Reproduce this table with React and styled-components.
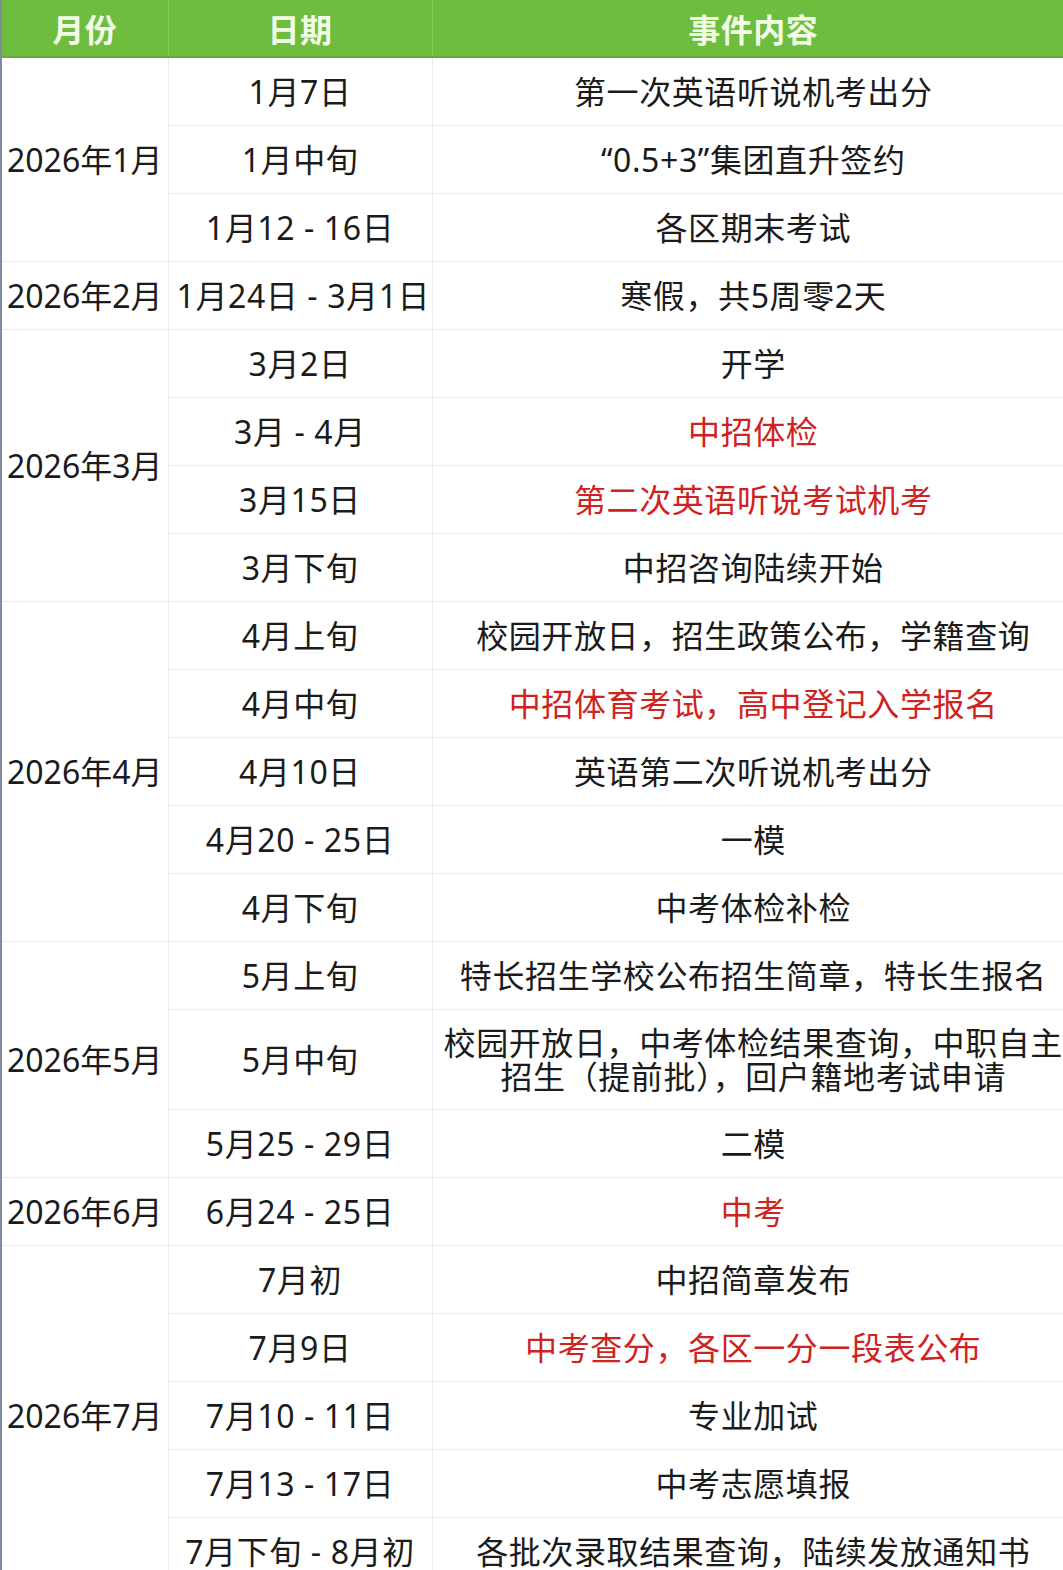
import React from "react";
import styled, { createGlobalStyle } from "styled-components";

const GlobalStyle = createGlobalStyle`
  html, body {
    margin: 0;
    padding: 0;
    background: #ffffff;
    overflow: hidden;
  }
`;

const Frame = styled.div`
  width: 1074px;
  border-left: 2px solid #7f8c9e;
  background: #ffffff;
  font-family: "Noto Sans", "Noto Sans CJK SC", sans-serif;
`;

const Table = styled.table`
  width: 1072px;
  border-collapse: collapse;
  table-layout: fixed;
`;

const HeadCell = styled.th`
  height: 56px;
  padding: 0;
  background: #6fbd3f;
  border-bottom: 2px solid #63ad36;
  border-right: 1px solid #86cc5c;
  color: #f1fbe6;
  font-size: 32px;
  font-weight: 700;
  text-align: center;
  letter-spacing: 0.5px;

  &:last-child {
    border-right: none;
  }
`;

const Cell = styled.td`
  height: ${(props) => (props.$tall ? "99px" : "67px")};
  padding: 0 8px;
  border: 1px solid #ebebeb;
  color: ${(props) => (props.$red ? "#cf2321" : "#1b1b1b")};
  font-size: 32px;
  line-height: 34px;
  letter-spacing: 0.6px;
  text-align: center;
  vertical-align: middle;
  white-space: ${(props) => (props.$wrap ? "normal" : "nowrap")};
`;

const MonthCell = styled(Cell)`
  padding: 0;
  letter-spacing: 0;
  border-left: none;
`;

const EventCell = styled(Cell)`
  border-right: none;
`;

const schedule = [
  {
    month: "2026年1月",
    rows: [
      ["1月7日", "第一次英语听说机考出分"],
      ["1月中旬", "“0.5+3”集团直升签约"],
      ["1月12 - 16日", "各区期末考试"],
    ],
  },
  {
    month: "2026年2月",
    rows: [["1月24日 - 3月1日", "寒假，共5周零2天"]],
  },
  {
    month: "2026年3月",
    rows: [
      ["3月2日", "开学"],
      ["3月 - 4月", "中招体检", true],
      ["3月15日", "第二次英语听说考试机考", true],
      ["3月下旬", "中招咨询陆续开始"],
    ],
  },
  {
    month: "2026年4月",
    rows: [
      ["4月上旬", "校园开放日，招生政策公布，学籍查询"],
      ["4月中旬", "中招体育考试，高中登记入学报名", true],
      ["4月10日", "英语第二次听说机考出分"],
      ["4月20 - 25日", "一模"],
      ["4月下旬", "中考体检补检"],
    ],
  },
  {
    month: "2026年5月",
    rows: [
      ["5月上旬", "特长招生学校公布招生简章，特长生报名"],
      ["5月中旬", "校园开放日，中考体检结果查询，中职自主招生（提前批），回户籍地考试申请", false, true],
      ["5月25 - 29日", "二模"],
    ],
  },
  {
    month: "2026年6月",
    rows: [["6月24 - 25日", "中考", true]],
  },
  {
    month: "2026年7月",
    rows: [
      ["7月初", "中招简章发布"],
      ["7月9日", "中考查分，各区一分一段表公布", true],
      ["7月10 - 11日", "专业加试"],
      ["7月13 - 17日", "中考志愿填报"],
      ["7月下旬 - 8月初", "各批次录取结果查询，陆续发放通知书"],
    ],
  },
];

export default function App() {
  return (
    <>
      <GlobalStyle />
      <Frame>
        <Table>
          <colgroup>
            <col style={{ width: "166px" }} />
            <col style={{ width: "264px" }} />
            <col style={{ width: "642px" }} />
          </colgroup>
          <thead>
            <tr>
              <HeadCell>月份</HeadCell>
              <HeadCell>日期</HeadCell>
              <HeadCell>事件内容</HeadCell>
            </tr>
          </thead>
          <tbody>
            {schedule.map((group) =>
              group.rows.map(([date, event, red, tall], i) => (
                <tr key={group.month + date}>
                  {i === 0 && (
                    <MonthCell rowSpan={group.rows.length}>{group.month}</MonthCell>
                  )}
                  <Cell $tall={tall}>{date}</Cell>
                  <EventCell $red={red} $tall={tall} $wrap={tall}>
                    {event}
                  </EventCell>
                </tr>
              ))
            )}
          </tbody>
        </Table>
      </Frame>
    </>
  );
}
